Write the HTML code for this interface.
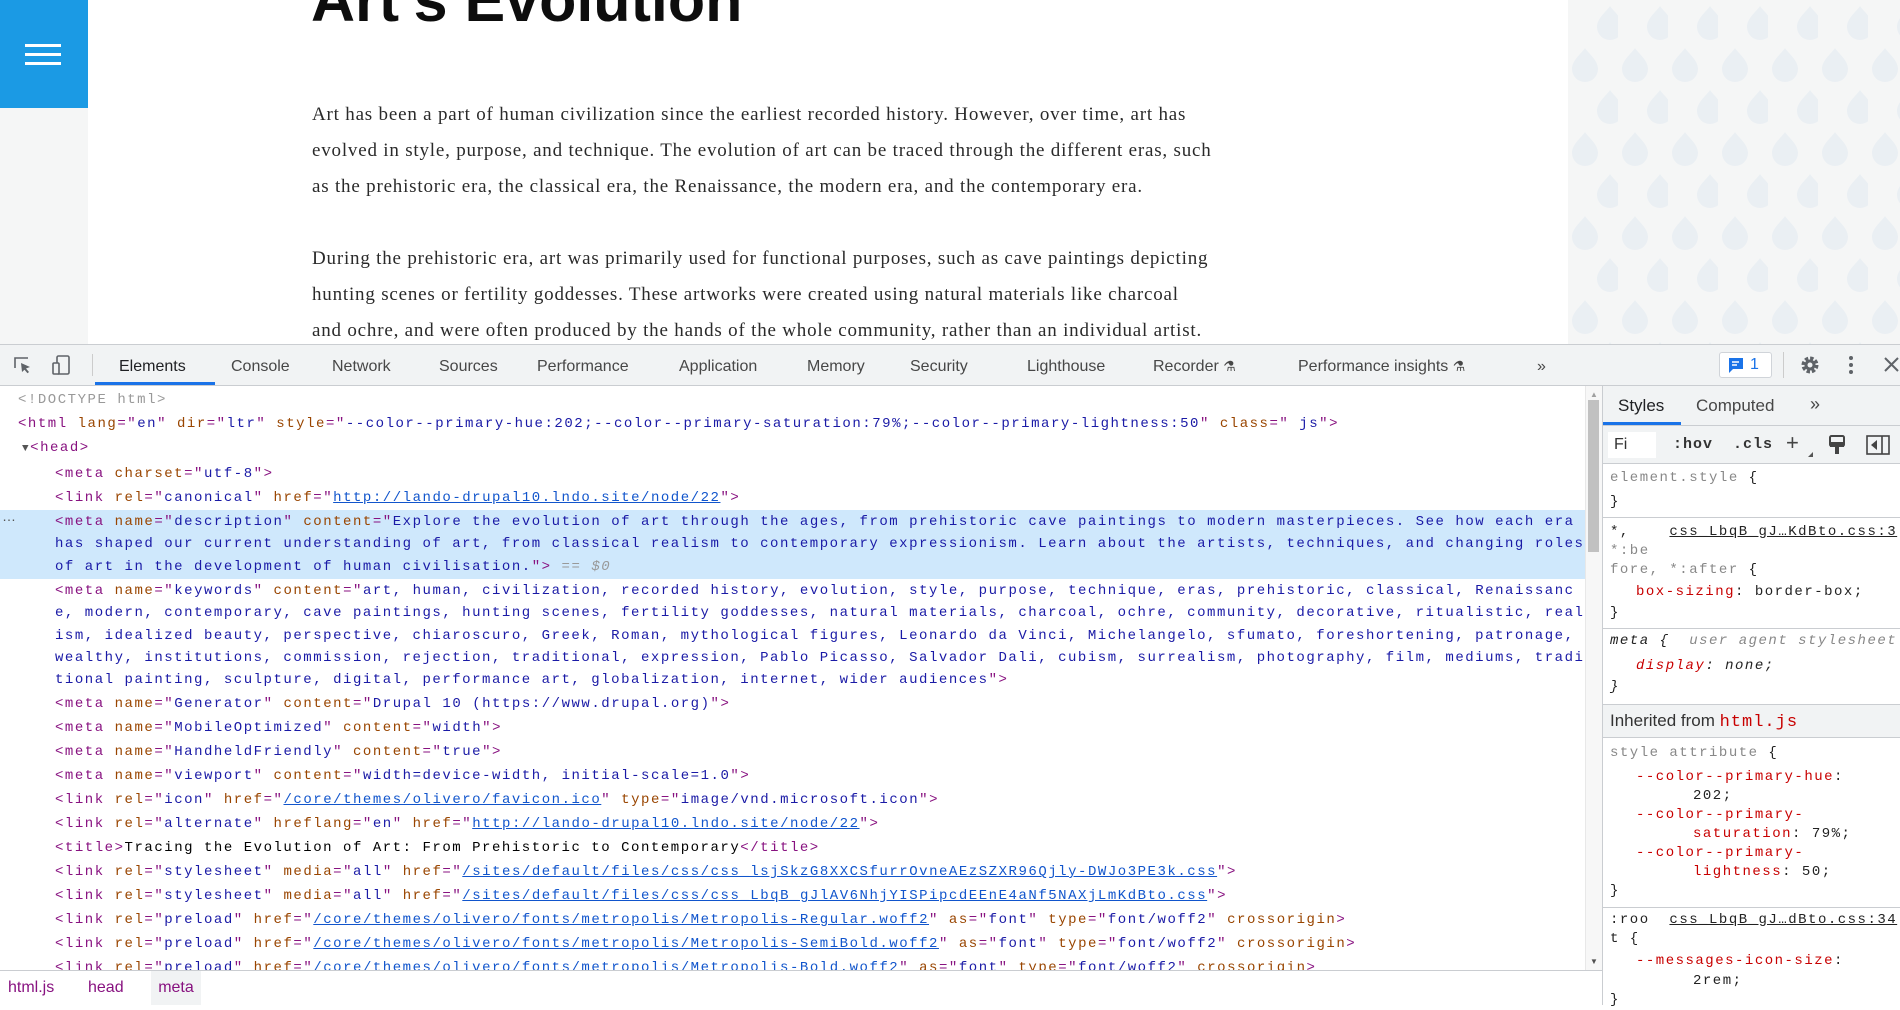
<!DOCTYPE html>
<html><head><meta charset="utf-8"><style>
*{box-sizing:border-box;margin:0;padding:0}
body{width:1900px;height:1005px;overflow:hidden;background:#fff;position:relative;font-family:"Liberation Sans",sans-serif}
.abs{position:absolute}
.m{font-family:"Liberation Mono",monospace;font-size:14px;letter-spacing:1.53px;white-space:pre;position:absolute;line-height:22px}
.t{color:#881280}.a{color:#994500}.v{color:#1a1aa6}.l{color:#1155cc;text-decoration:underline}
.g{color:#999}
.tab{position:absolute;top:358px;font-size:16px;color:#474747}
.s{font-family:"Liberation Mono",monospace;font-size:14px;letter-spacing:1.5px;white-space:pre;position:absolute;line-height:19px;color:#222}
.r{color:#c80000}.sg{color:#888}
.hr{position:absolute;left:1602px;width:298px;height:1px;background:#cacdd1}
.p{position:absolute;left:312px;width:1000px;font-family:'Liberation Serif',serif;font-size:19px;letter-spacing:0.8px;line-height:36px;color:#2a2a2a;white-space:nowrap}
</style></head><body>
<div class="abs" style="left:0;top:0;width:88px;height:344px;background:#f5f6f6"></div>
<div class="abs" style="left:0;top:0;width:88px;height:108px;background:#1b9ae4"></div>
<div class="abs" style="left:25px;top:44px;width:36px;height:3px;background:#fff"></div>
<div class="abs" style="left:25px;top:53px;width:36px;height:3px;background:#fff"></div>
<div class="abs" style="left:25px;top:62px;width:36px;height:3px;background:#fff"></div>
<div class="abs" style="left:311px;top:-35px;font-size:61px;font-weight:bold;color:#0d0d0d;line-height:70px">Art's Evolution</div>
<div class="p" style="top:97px">Art has been a part of human civilization since the earliest recorded history. However, over time, art has<br>evolved in style, purpose, and technique. The evolution of art can be traced through the different eras, such<br>as the prehistoric era, the classical era, the Renaissance, the modern era, and the contemporary era.</div>
<div class="p" style="top:241px">During the prehistoric era, art was primarily used for functional purposes, such as cave paintings depicting<br>hunting scenes or fertility goddesses. These artworks were created using natural materials like charcoal<br>and ochre, and were often produced by the hands of the whole community, rather than an individual artist.</div>
<svg class="abs" style="left:1568px;top:0" width="332" height="344"><defs><pattern id="p" width="50" height="84" patternUnits="userSpaceOnUse">
<path fill="#eaeff3" d="M42,6 C45,11 55,18 55,27 A13,13 0 1 1 29,27 C29,18 39,11 42,6Z"/>
<path fill="#eaeff3" d="M17,48 C20,53 30,60 30,69 A13,13 0 1 1 4,69 C4,60 14,53 17,48Z"/>
<path fill="#eaeff3" d="M67,48 C70,53 80,60 80,69 A13,13 0 1 1 54,69 C54,60 64,53 67,48Z"/>
</pattern></defs><rect width="332" height="344" fill="#f5f6f6"/><rect width="332" height="344" fill="url(#p)"/></svg>
<div class="abs" style="left:0;top:344px;width:1900px;height:42px;background:#f1f3f4;border-top:1px solid #cacdd1;border-bottom:1px solid #cacdd1"></div>
<svg class="abs" style="left:12px;top:355px" width="20" height="20"><path d="M3 13V3h13" fill="none" stroke="#5f6368" stroke-width="1.6"/><path d="M9 8l9 4-4 1.5 3 3.5-1.5 1.3-3-3.5L10 17z" fill="#5f6368"/></svg>
<svg class="abs" style="left:51px;top:354px" width="22" height="22"><rect x="6" y="2" width="12" height="18" rx="1.5" fill="none" stroke="#5f6368" stroke-width="1.6"/><rect x="2" y="9" width="6" height="11" rx="1" fill="#f1f3f4" stroke="#5f6368" stroke-width="1.6"/></svg>
<div class="abs" style="left:92px;top:354px;width:1px;height:22px;background:#ccc"></div>
<div class="tab" style="left:119px;color:#202124">Elements</div>
<div class="abs" style="left:95px;top:382px;width:120px;height:3px;background:#1a73e8"></div>
<div class="tab" style="left:231px">Console</div>
<div class="tab" style="left:332px">Network</div>
<div class="tab" style="left:439px">Sources</div>
<div class="tab" style="left:537px">Performance</div>
<div class="tab" style="left:679px">Application</div>
<div class="tab" style="left:807px">Memory</div>
<div class="tab" style="left:910px">Security</div>
<div class="tab" style="left:1027px">Lighthouse</div>
<div class="tab" style="left:1153px">Recorder <span style="font-size:14px">⚗</span></div>
<div class="tab" style="left:1298px">Performance insights <span style="font-size:14px">⚗</span></div>
<div class="tab" style="left:1537px">»</div>
<div class="abs" style="left:1719px;top:352px;width:53px;height:26px;border:1px solid #d0d4d9;border-radius:3px;background:#fff"></div>
<svg class="abs" style="left:1727px;top:356px" width="18" height="18"><path d="M2 2h14v11H6l-4 4z" fill="#1a73e8"/><path d="M5 6h7M5 9h5" stroke="#fff" stroke-width="1.5"/></svg>
<div class="abs" style="left:1750px;top:356px;font-size:16px;color:#1a73e8">1</div>
<div class="abs" style="left:1783px;top:352px;width:1px;height:26px;background:#ccc"></div>
<svg class="abs" style="left:1798px;top:353px" width="24" height="24"><circle cx="12" cy="12" r="6" fill="none" stroke="#5f6368" stroke-width="5" stroke-dasharray="3 1.7"/><circle cx="12" cy="12" r="5.5" fill="#5f6368"/><circle cx="12" cy="12" r="2.5" fill="#f1f3f4"/></svg>
<div class="abs" style="left:1849px;top:356px;width:4px;height:4px;border-radius:2px;background:#5f6368;box-shadow:0 7px 0 #5f6368,0 14px 0 #5f6368"></div>
<svg class="abs" style="left:1883px;top:356px" width="17" height="17"><path d="M2 2l13 13M15 2L2 15" stroke="#5f6368" stroke-width="2"/></svg>
<div class="abs" style="left:0;top:510px;width:1585px;height:69px;background:#cfe8fc"></div>
<div class="abs" style="left:2px;top:508px;font-size:14px;color:#555">…</div>
<div class="m g" style="left:18px;top:389px">&lt;!DOCTYPE html&gt;</div>
<div class="m" style="left:18px;top:413px"><span class="t">&lt;html </span><span class="a">lang</span><span class="t">="</span><span class="v">en</span><span class="t">" </span><span class="a">dir</span><span class="t">="</span><span class="v">ltr</span><span class="t">" </span><span class="a">style</span><span class="t">="</span><span class="v">--color--primary-hue:202;--color--primary-saturation:79%;--color--primary-lightness:50</span><span class="t">" </span><span class="a">class</span><span class="t">="</span><span class="v"> js</span><span class="t">"&gt;</span></div>
<div class="m" style="left:22px;top:437px"><span style="color:#555;font-size:11px">▼</span><span class="t">&lt;head&gt;</span></div>
<div class="m" style="left:55px;top:463px"><span class="t">&lt;meta </span><span class="a">charset</span><span class="t">="</span><span class="v">utf-8</span><span class="t">"&gt;</span></div>
<div class="m" style="left:55px;top:487px"><span class="t">&lt;link </span><span class="a">rel</span><span class="t">="</span><span class="v">canonical</span><span class="t">" </span><span class="a">href</span><span class="t">="</span><span class="l">http://lando-drupal10.lndo.site/node/22</span><span class="t">"&gt;</span></div>
<div class="m" style="left:55px;top:511px"><span class="t">&lt;meta </span><span class="a">name</span><span class="t">="</span><span class="v">description</span><span class="t">" </span><span class="a">content</span><span class="t">="</span><span class="v">Explore the evolution of art through the ages, from prehistoric cave paintings to modern masterpieces. See how each era</span></div>
<div class="m v" style="left:55px;top:533px">has shaped our current understanding of art, from classical realism to contemporary expressionism. Learn about the artists, techniques, and changing roles</div>
<div class="m" style="left:55px;top:556px"><span class="v">of art in the development of human civilisation.</span><span class="t">"&gt;</span> <span class="g" style="font-style:italic">== $0</span></div>
<div class="m" style="left:55px;top:580px"><span class="t">&lt;meta </span><span class="a">name</span><span class="t">="</span><span class="v">keywords</span><span class="t">" </span><span class="a">content</span><span class="t">="</span><span class="v">art, human, civilization, recorded history, evolution, style, purpose, technique, eras, prehistoric, classical, Renaissanc</span></div>
<div class="m v" style="left:55px;top:602px">e, modern, contemporary, cave paintings, hunting scenes, fertility goddesses, natural materials, charcoal, ochre, community, decorative, ritualistic, real</div>
<div class="m v" style="left:55px;top:625px">ism, idealized beauty, perspective, chiaroscuro, Greek, Roman, mythological figures, Leonardo da Vinci, Michelangelo, sfumato, foreshortening, patronage,</div>
<div class="m v" style="left:55px;top:647px">wealthy, institutions, commission, rejection, traditional, expression, Pablo Picasso, Salvador Dali, cubism, surrealism, photography, film, mediums, tradi</div>
<div class="m" style="left:55px;top:669px"><span class="v">tional painting, sculpture, digital, performance art, globalization, internet, wider audiences</span><span class="t">"&gt;</span></div>
<div class="m" style="left:55px;top:693px"><span class="t">&lt;meta </span><span class="a">name</span><span class="t">="</span><span class="v">Generator</span><span class="t">" </span><span class="a">content</span><span class="t">="</span><span class="v">Drupal 10 (https://www.drupal.org)</span><span class="t">"&gt;</span></div>
<div class="m" style="left:55px;top:717px"><span class="t">&lt;meta </span><span class="a">name</span><span class="t">="</span><span class="v">MobileOptimized</span><span class="t">" </span><span class="a">content</span><span class="t">="</span><span class="v">width</span><span class="t">"&gt;</span></div>
<div class="m" style="left:55px;top:741px"><span class="t">&lt;meta </span><span class="a">name</span><span class="t">="</span><span class="v">HandheldFriendly</span><span class="t">" </span><span class="a">content</span><span class="t">="</span><span class="v">true</span><span class="t">"&gt;</span></div>
<div class="m" style="left:55px;top:765px"><span class="t">&lt;meta </span><span class="a">name</span><span class="t">="</span><span class="v">viewport</span><span class="t">" </span><span class="a">content</span><span class="t">="</span><span class="v">width=device-width, initial-scale=1.0</span><span class="t">"&gt;</span></div>
<div class="m" style="left:55px;top:789px"><span class="t">&lt;link </span><span class="a">rel</span><span class="t">="</span><span class="v">icon</span><span class="t">" </span><span class="a">href</span><span class="t">="</span><span class="l">/core/themes/olivero/favicon.ico</span><span class="t">" </span><span class="a">type</span><span class="t">="</span><span class="v">image/vnd.microsoft.icon</span><span class="t">"&gt;</span></div>
<div class="m" style="left:55px;top:813px"><span class="t">&lt;link </span><span class="a">rel</span><span class="t">="</span><span class="v">alternate</span><span class="t">" </span><span class="a">hreflang</span><span class="t">="</span><span class="v">en</span><span class="t">" </span><span class="a">href</span><span class="t">="</span><span class="l">http://lando-drupal10.lndo.site/node/22</span><span class="t">"&gt;</span></div>
<div class="m" style="left:55px;top:837px"><span class="t">&lt;title&gt;</span>Tracing the Evolution of Art: From Prehistoric to Contemporary<span class="t">&lt;/title&gt;</span></div>
<div class="m" style="left:55px;top:861px"><span class="t">&lt;link </span><span class="a">rel</span><span class="t">="</span><span class="v">stylesheet</span><span class="t">" </span><span class="a">media</span><span class="t">="</span><span class="v">all</span><span class="t">" </span><span class="a">href</span><span class="t">="</span><span class="l">/sites/default/files/css/css_lsjSkzG8XXCSfurrOvneAEzSZXR96Qjly-DWJo3PE3k.css</span><span class="t">"&gt;</span></div>
<div class="m" style="left:55px;top:885px"><span class="t">&lt;link </span><span class="a">rel</span><span class="t">="</span><span class="v">stylesheet</span><span class="t">" </span><span class="a">media</span><span class="t">="</span><span class="v">all</span><span class="t">" </span><span class="a">href</span><span class="t">="</span><span class="l">/sites/default/files/css/css_LbqB_gJlAV6NhjYISPipcdEEnE4aNf5NAXjLmKdBto.css</span><span class="t">"&gt;</span></div>
<div class="m" style="left:55px;top:909px"><span class="t">&lt;link </span><span class="a">rel</span><span class="t">="</span><span class="v">preload</span><span class="t">" </span><span class="a">href</span><span class="t">="</span><span class="l">/core/themes/olivero/fonts/metropolis/Metropolis-Regular.woff2</span><span class="t">" </span><span class="a">as</span><span class="t">="</span><span class="v">font</span><span class="t">" </span><span class="a">type</span><span class="t">="</span><span class="v">font/woff2</span><span class="t">" </span><span class="a">crossorigin</span><span class="t">&gt;</span></div>
<div class="m" style="left:55px;top:933px"><span class="t">&lt;link </span><span class="a">rel</span><span class="t">="</span><span class="v">preload</span><span class="t">" </span><span class="a">href</span><span class="t">="</span><span class="l">/core/themes/olivero/fonts/metropolis/Metropolis-SemiBold.woff2</span><span class="t">" </span><span class="a">as</span><span class="t">="</span><span class="v">font</span><span class="t">" </span><span class="a">type</span><span class="t">="</span><span class="v">font/woff2</span><span class="t">" </span><span class="a">crossorigin</span><span class="t">&gt;</span></div>
<div class="m" style="left:55px;top:957px"><span class="t">&lt;link </span><span class="a">rel</span><span class="t">="</span><span class="v">preload</span><span class="t">" </span><span class="a">href</span><span class="t">="</span><span class="l">/core/themes/olivero/fonts/metropolis/Metropolis-Bold.woff2</span><span class="t">" </span><span class="a">as</span><span class="t">="</span><span class="v">font</span><span class="t">" </span><span class="a">type</span><span class="t">="</span><span class="v">font/woff2</span><span class="t">" </span><span class="a">crossorigin</span><span class="t">&gt;</span></div>
<div class="abs" style="left:0;top:970px;width:1602px;height:35px;background:#fff;border-top:1px solid #cacdd1"></div>
<div class="abs" style="left:151px;top:971px;width:50px;height:34px;background:#f1f3f4"></div>
<div class="abs" style="left:8px;top:979px;font-size:16px;color:#881280">html.js</div>
<div class="abs" style="left:88px;top:979px;font-size:16px;color:#881280">head</div>
<div class="abs" style="left:151px;top:979px;width:50px;text-align:center;font-size:16px;color:#881280">meta</div>
<div class="abs" style="left:1585px;top:386px;width:17px;height:584px;background:#f7f7f7;border-left:1px solid #e8e8e8"></div>
<div class="abs" style="left:1588px;top:400px;width:11px;height:152px;background:#c1c1c1"></div>
<div class="abs" style="left:1590px;top:390px;font-size:8px;color:#a0a0a0">▲</div>
<div class="abs" style="left:1590px;top:957px;font-size:8px;color:#505050">▼</div>
<div class="abs" style="left:1602px;top:386px;width:1px;height:619px;background:#cacdd1"></div>
<div class="abs" style="left:1603px;top:386px;width:297px;height:40px;background:#f1f3f4;border-bottom:1px solid #cacdd1"></div>
<div class="abs" style="left:1618px;top:396px;font-size:17px;color:#202124">Styles</div>
<div class="abs" style="left:1603px;top:422px;width:78px;height:3px;background:#1a73e8"></div>
<div class="abs" style="left:1696px;top:396px;font-size:17px;color:#474747">Computed</div>
<div class="abs" style="left:1810px;top:394px;font-size:18px;color:#474747">»</div>
<div class="abs" style="left:1603px;top:426px;width:297px;height:38px;background:#f1f3f4;border-bottom:1px solid #cacdd1"></div>
<div class="abs" style="left:1608px;top:432px;width:48px;height:26px;background:#fff"></div>
<div class="abs" style="left:1614px;top:436px;font-size:16px;color:#333">Fi</div>
<div class="abs" style="left:1673px;top:436px;font-family:'Liberation Mono',monospace;font-weight:bold;font-size:15px;color:#333;letter-spacing:1px">:hov&nbsp; .cls</div>
<div class="abs" style="left:1786px;top:430px;font-size:22px;color:#444">+</div>
<div class="abs" style="left:1808px;top:452px;width:0;height:0;border-left:5px solid transparent;border-bottom:5px solid #555"></div>
<svg class="abs" style="left:1828px;top:434px" width="18" height="22"><rect x="2" y="2" width="14" height="10" rx="1.5" fill="none" stroke="#444" stroke-width="2"/><rect x="2" y="8" width="14" height="5" fill="#444"/><rect x="7" y="13" width="4" height="7" fill="#444"/></svg>
<svg class="abs" style="left:1866px;top:435px" width="24" height="20"><rect x="1" y="1" width="22" height="18" fill="none" stroke="#444" stroke-width="1.6"/><path d="M16 1v18" stroke="#444" stroke-width="1.6"/><path d="M11 5v10L5 10z" fill="#444"/></svg>
<div class="s sg" style="left:1610px;top:469px">element.style <span style="color:#222">{</span></div>
<div class="s" style="left:1610px;top:493px">}</div>
<div class="hr" style="top:517px"></div>
<div class="s" style="left:1610px;top:523px">*,    <span style="text-decoration:underline">css_LbqB_gJ…KdBto.css:3</span></div>
<div class="s sg" style="left:1610px;top:542px">*:be</div>
<div class="s" style="left:1610px;top:561px"><span class="sg">fore, *:after</span> {</div>
<div class="s" style="left:1636px;top:583px"><span class="r">box-sizing</span>: border-box;</div>
<div class="s" style="left:1610px;top:604px">}</div>
<div class="hr" style="top:628px"></div>
<div class="s" style="left:1610px;top:632px;font-style:italic">meta {  <span class="sg">user agent stylesheet</span></div>
<div class="s" style="left:1636px;top:657px;font-style:italic"><span class="r">display</span>: none;</div>
<div class="s" style="left:1610px;top:678px;font-style:italic">}</div>
<div class="abs" style="left:1603px;top:704px;width:297px;height:34px;background:#f1f3f4;border-top:1px solid #cacdd1;border-bottom:1px solid #cacdd1"></div>
<div class="abs" style="left:1610px;top:711px;font-size:17px;color:#333">Inherited from <span style="font-family:'Liberation Mono',monospace;color:#c80000;letter-spacing:1px">html.js</span></div>
<div class="s sg" style="left:1610px;top:744px">style attribute <span style="color:#222">{</span></div>
<div class="s r" style="left:1636px;top:768px">--color--primary-hue<span style="color:#222">:</span></div>
<div class="s" style="left:1693px;top:787px">202;</div>
<div class="s r" style="left:1636px;top:806px">--color--primary-</div>
<div class="s" style="left:1693px;top:825px"><span class="r">saturation</span>: 79%;</div>
<div class="s r" style="left:1636px;top:844px">--color--primary-</div>
<div class="s" style="left:1693px;top:863px"><span class="r">lightness</span>: 50;</div>
<div class="s" style="left:1610px;top:882px">}</div>
<div class="hr" style="top:907px"></div>
<div class="s" style="left:1610px;top:911px">:roo  <span style="text-decoration:underline">css_LbqB_gJ…dBto.css:34</span></div>
<div class="s" style="left:1610px;top:930px">t {</div>
<div class="s r" style="left:1636px;top:952px">--messages-icon-size<span style="color:#222">:</span></div>
<div class="s" style="left:1693px;top:972px">2rem;</div>
<div class="s" style="left:1610px;top:991px">}</div>
</body></html>
